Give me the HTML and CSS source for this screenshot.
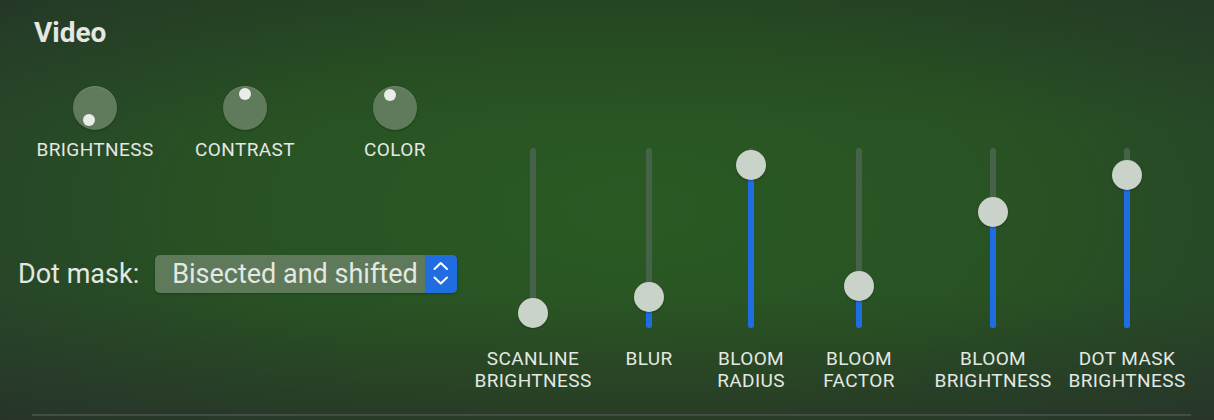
FILE: index.html
```html
<!DOCTYPE html>
<html lang="en">
<head>
    <meta charset="UTF-8">
    <title>Video Settings</title>
    <link rel="stylesheet" href="styles.css">
</head>
<body>
<div class="panel">
    <h1 class="title">Video</h1>
    <div class="content">
        <div class="left">
            <div class="knobs">
                <div class="knob-col">
                    <div class="knob"><span class="knob-dot" style="left: 10px; top: 28px;"></span></div>
                    <span class="knob-label">BRIGHTNESS</span>
                </div>
                <div class="knob-col">
                    <div class="knob"><span class="knob-dot" style="left: 16px; top: 2px;"></span></div>
                    <span class="knob-label">CONTRAST</span>
                </div>
                <div class="knob-col">
                    <div class="knob"><span class="knob-dot" style="left: 11px; top: 3px;"></span></div>
                    <span class="knob-label">COLOR</span>
                </div>
            </div>
            <div class="mask-row">
                <span class="mask-label">Dot mask:</span>
                <div class="popup">
                    <span class="popup-value">Bisected and shifted</span>
                    <span class="stepper">
                        <svg width="32" height="38" viewBox="0 0 32 38">
                            <polyline points="9.5,14 15.75,8 22,14" fill="none" stroke="#fff" stroke-width="2" stroke-linecap="round" stroke-linejoin="round"/>
                            <polyline points="9.5,22.5 15.75,28.5 22,22.5" fill="none" stroke="#fff" stroke-width="2" stroke-linecap="round" stroke-linejoin="round"/>
                        </svg>
                    </span>
                </div>
            </div>
        </div>
        <div class="sliders">
            <div class="slider-col" style="width: 126px;">
                <div class="track">
                    <div class="fill" style="height: 15px;"></div>
                    <div class="thumb" style="bottom: 0px;"></div>
                </div>
                <span class="slider-label">SCANLINE<br>BRIGHTNESS</span>
            </div>
            <div class="slider-col" style="width: 106px;">
                <div class="track">
                    <div class="fill" style="height: 31px;"></div>
                    <div class="thumb" style="bottom: 16px;"></div>
                </div>
                <span class="slider-label">BLUR</span>
            </div>
            <div class="slider-col" style="width: 98px;">
                <div class="track">
                    <div class="fill" style="height: 163px;"></div>
                    <div class="thumb" style="bottom: 148px;"></div>
                </div>
                <span class="slider-label">BLOOM<br>RADIUS</span>
            </div>
            <div class="slider-col" style="width: 118px;">
                <div class="track">
                    <div class="fill" style="height: 42px;"></div>
                    <div class="thumb" style="bottom: 27px;"></div>
                </div>
                <span class="slider-label">BLOOM<br>FACTOR</span>
            </div>
            <div class="slider-col" style="width: 150px;">
                <div class="track">
                    <div class="fill" style="height: 116px;"></div>
                    <div class="thumb" style="bottom: 101px;"></div>
                </div>
                <span class="slider-label">BLOOM<br>BRIGHTNESS</span>
            </div>
            <div class="slider-col" style="width: 118px;">
                <div class="track">
                    <div class="fill" style="height: 153px;"></div>
                    <div class="thumb" style="bottom: 138px;"></div>
                </div>
                <span class="slider-label">DOT MASK<br>BRIGHTNESS</span>
            </div>
        </div>
    </div>
    <div class="divider"></div>
</div>
</body>
</html>
```

FILE: styles.css
```css
html, body {
    margin: 0;
    height: 100%;
}
body {
    font-family: Roboto, "Liberation Sans", sans-serif;
    color: #e4e8e3;
    background:
        linear-gradient(to bottom, rgba(30, 36, 30, 0.25) 0%, rgba(30, 36, 30, 0) 30%, rgba(30, 36, 30, 0) 70%, rgba(40, 44, 40, 0.55) 100%),
        radial-gradient(ellipse 75% 100% at 52% 50%, #2a5a24 0%, #285223 45%, #27432a 80%, #253025 100%);
    overflow: hidden;
}
.panel {
    padding-top: 17px;
}
.title {
    margin: 0 0 0 34px;
    font-size: 28px;
    line-height: 32px;
    font-weight: 700;
}
.content {
    display: flex;
}
.left {
    width: 470px;
}
.knobs {
    display: flex;
    margin: 37px 0 0 20px;
}
.knob-col {
    width: 150px;
    display: flex;
    flex-direction: column;
    align-items: center;
}
.knob {
    position: relative;
    width: 44px;
    height: 44px;
    border-radius: 50%;
    background: #5f7b5c;
    box-shadow: inset 0 1px 0 rgba(255, 255, 255, 0.12), 0 1px 2px rgba(0, 0, 0, 0.3);
}
.knob-dot {
    position: absolute;
    width: 12px;
    height: 12px;
    border-radius: 50%;
    background: #e9ede8;
}
.knob-label {
    margin-top: 8px;
    font-size: 19px;
    line-height: 24px;
    letter-spacing: 0.4px;
}
.mask-row {
    display: flex;
    align-items: center;
    margin: 93px 0 0 18px;
}
.mask-label {
    font-size: 27px;
    line-height: 30px;
    margin-right: 16px;
}
.popup {
    display: flex;
    width: 302px;
    height: 38px;
    border-radius: 5px;
    background: #5e7a5b;
    box-shadow: 0 1px 2px rgba(0, 0, 0, 0.25);
}
.popup-value {
    flex-grow: 1;
    padding-left: 17px;
    font-size: 27px;
    line-height: 38px;
    white-space: nowrap;
}
.stepper {
    width: 32px;
    height: 38px;
    background: #1f6de0;
    border-radius: 0 5px 5px 0;
}
.stepper svg {
    display: block;
}
.sliders {
    display: flex;
    padding-top: 99px;
}
.slider-col {
    display: flex;
    flex-direction: column;
    align-items: center;
}
.track {
    position: relative;
    width: 6px;
    height: 180px;
    border-radius: 3px;
    background: #46634a;
}
.fill {
    position: absolute;
    left: 0;
    bottom: 0;
    width: 6px;
    border-radius: 3px;
    background: #1f6ce3;
}
.thumb {
    position: absolute;
    left: -12px;
    width: 30px;
    height: 30px;
    border-radius: 50%;
    background: #c9d3c9;
    box-shadow: 0 1px 2px rgba(0, 0, 0, 0.3);
}
.slider-label {
    margin-top: 20px;
    font-size: 19px;
    line-height: 22px;
    letter-spacing: 0.4px;
    text-align: center;
    white-space: nowrap;
}
.divider {
    height: 2px;
    margin: 22px 23px 0 32px;
    background: #444d45;
}
```
